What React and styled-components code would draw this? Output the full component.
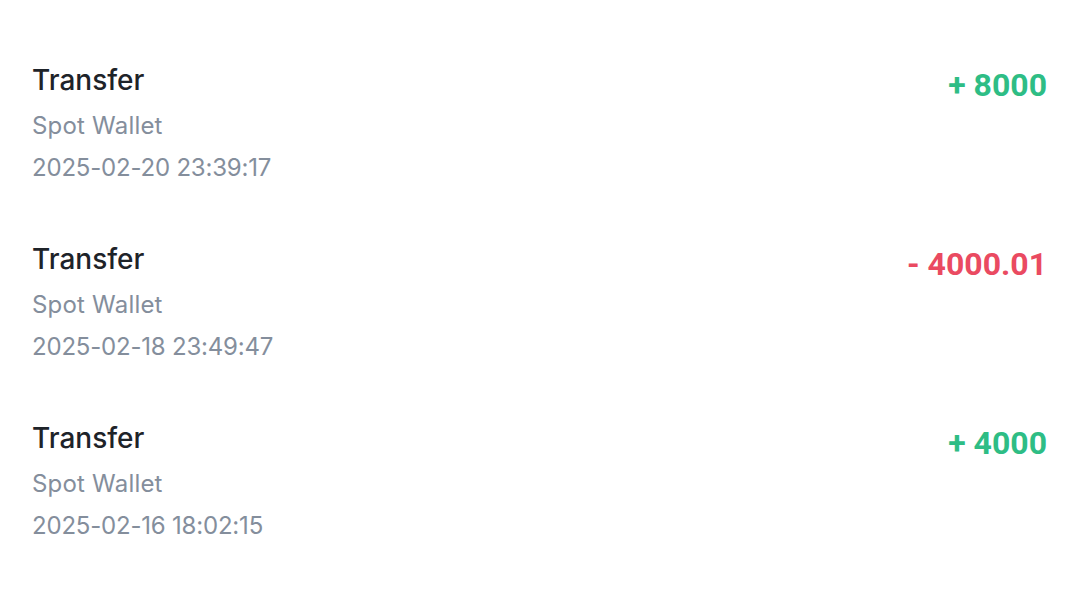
import React from 'react';
import styled, { createGlobalStyle } from 'styled-components';

const GlobalStyle = createGlobalStyle`
  html, body {
    margin: 0;
    padding: 0;
    background: #ffffff;
  }
  body {
    font-family: Inter, "Noto Sans", "Liberation Sans", sans-serif;
  }
`;

const List = styled.div`
  display: flex;
  flex-direction: column;
  gap: 50px;
  padding: 60px 33px 0 32px;
`;

const Row = styled.div`
  display: flex;
  justify-content: space-between;
  align-items: flex-start;
`;

const Info = styled.div`
  display: flex;
  flex-direction: column;
`;

const Title = styled.div`
  font-size: 28px;
  line-height: 40px;
  font-weight: 500;
  color: #1e2329;
`;

const Sub = styled.div`
  font-size: 24px;
  line-height: 42px;
  color: #848e9c;
  letter-spacing: ${(p) => (p.$wide ? '0.2px' : '-0.2px')};

  &:nth-child(2) {
    margin-top: 5px;
  }
`;

const Amount = styled.div`
  font-family: Roboto, "Liberation Sans", sans-serif;
  font-size: 32px;
  line-height: 50px;
  font-weight: 700;
  color: ${(p) => (p.$negative ? '#ea4a61' : '#2ebd85')};
`;

const records = [
  { time: '2025-02-20 23:39:17', amount: '+ 8000' },
  { time: '2025-02-18 23:49:47', amount: '- 4000.01', negative: true },
  { time: '2025-02-16 18:02:15', amount: '+ 4000' },
];

const App = () => (
  <>
    <GlobalStyle />
    <List>
      {records.map((r) => (
        <Row key={r.time}>
          <Info>
            <Title>Transfer</Title>
            <Sub $wide>Spot Wallet</Sub>
            <Sub>{r.time}</Sub>
          </Info>
          <Amount $negative={r.negative}>{r.amount}</Amount>
        </Row>
      ))}
    </List>
  </>
);

export default App;
